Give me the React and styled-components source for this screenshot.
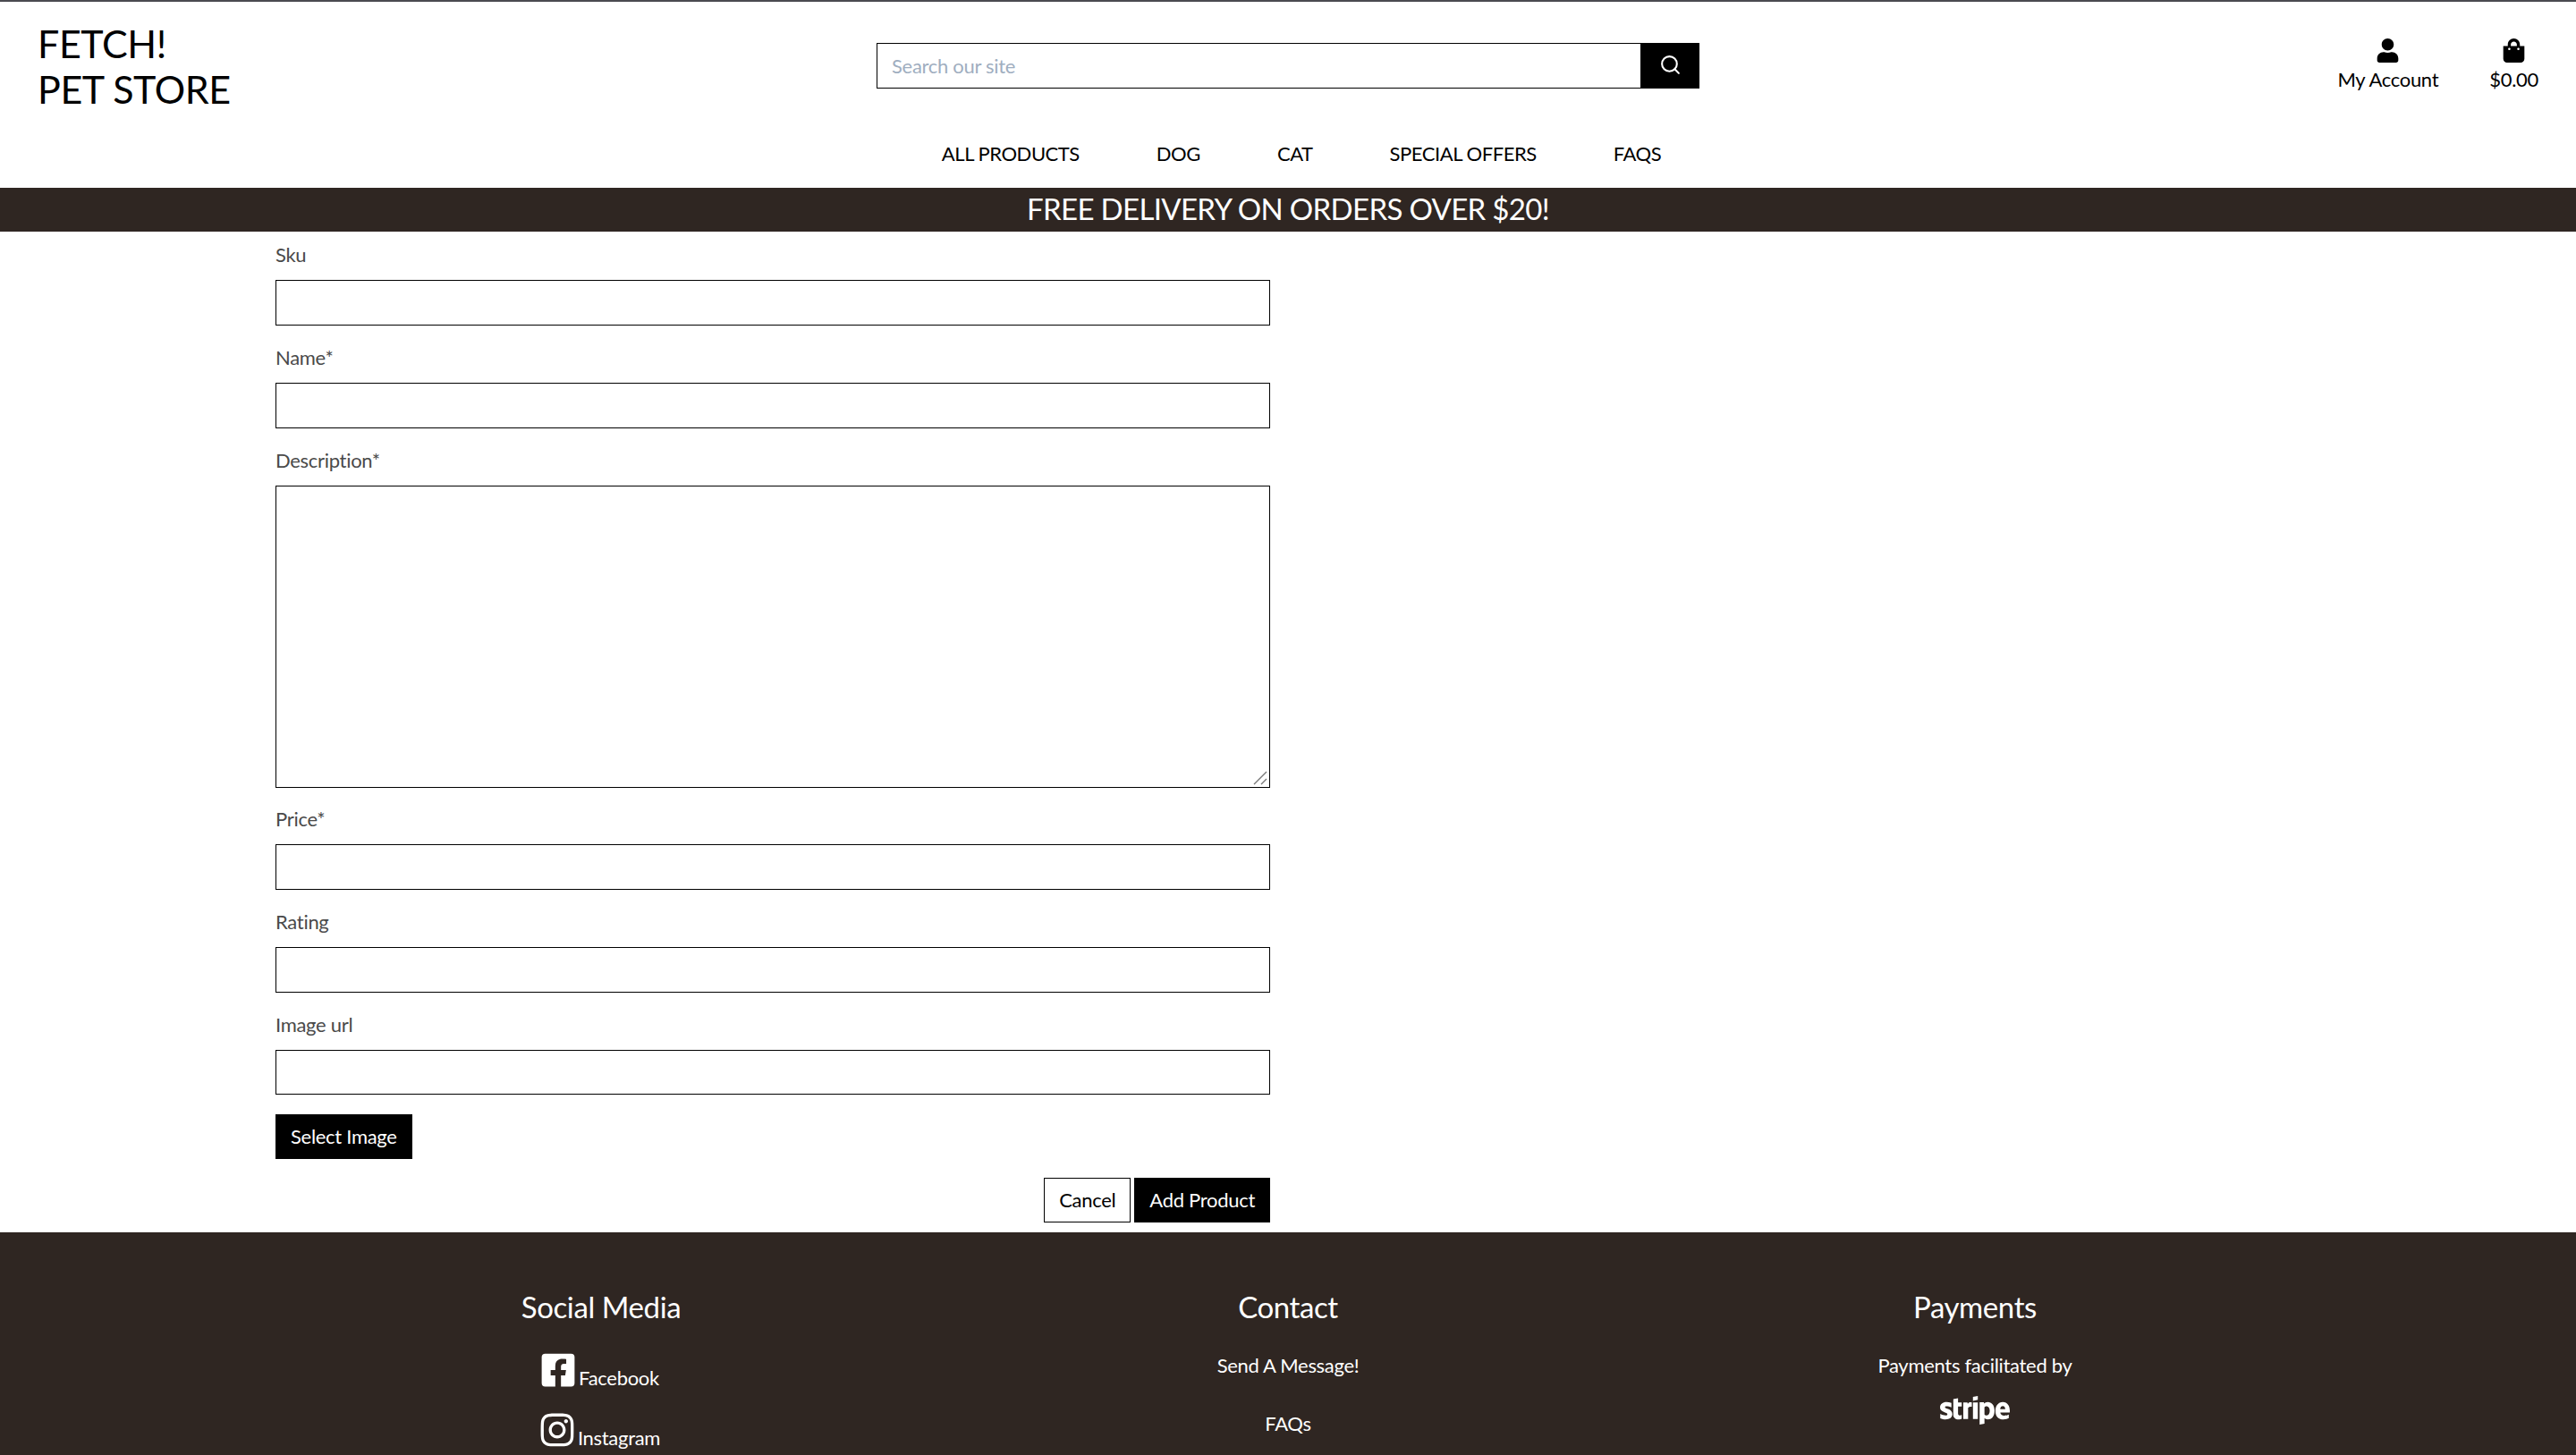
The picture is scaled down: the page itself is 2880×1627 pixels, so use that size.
import styled, { createGlobalStyle } from "styled-components";
import {
  FaUser,
  FaShoppingBag,
  FaFacebookSquare,
  FaInstagram,
  FaStripe,
} from "react-icons/fa";
import { FiSearch } from "react-icons/fi";

const GlobalStyle = createGlobalStyle`
  html, body {
    margin: 0;
    padding: 0;
    height: 100%;
    overflow: hidden;
    background: #fff;
  }
  * {
    box-sizing: border-box;
  }
  #root {
    height: 100%;
  }
`;

const Page = styled.div`
  height: 100%;
  display: flex;
  flex-direction: column;
  font-family: "Lato", "Liberation Sans", sans-serif;
  font-size: 22px;
  line-height: 26px;
  letter-spacing: -0.3px;
  color: #000;
`;

const Header = styled.header`
  border-top: 2px solid #4a4a50;
  height: 210px;
  flex: none;
`;

const TopRow = styled.div`
  display: grid;
  grid-template-columns: 1fr 920px 1fr;
  height: 146px;
`;

const Logo = styled.div`
  padding: 21px 0 0 42px;
  font-size: 43px;
  line-height: 51px;
  letter-spacing: -0.4px;
`;

const SearchBar = styled.form`
  display: flex;
  height: 51px;
  margin-top: 46px;
`;

const SearchInput = styled.input`
  flex: 1;
  min-width: 0;
  height: 100%;
  padding: 0 16px;
  border: 1px solid #000;
  border-right: none;
  border-radius: 0;
  outline: none;
  font: inherit;
  letter-spacing: inherit;

  &::placeholder {
    color: #a0aec0;
    opacity: 1;
  }
`;

const SearchButton = styled.button`
  width: 66px;
  height: 100%;
  padding: 0 0 3px;
  display: flex;
  align-items: center;
  justify-content: center;
  border: none;
  border-radius: 0;
  background: #000;
  color: #fff;
  font-size: 25px;
`;

const Tools = styled.div`
  display: flex;
  justify-content: flex-end;
  gap: 57px;
  padding: 41px 42px 0 0;
`;

const Tool = styled.a`
  display: flex;
  flex-direction: column;
  align-items: center;
  gap: 6px;

  svg {
    font-size: 27px;
  }
`;

const Nav = styled.nav`
  display: flex;
  justify-content: center;
  gap: 86px;
  height: 48px;
  padding-left: 30px;
  align-items: center;
  letter-spacing: -0.45px;
`;

const Banner = styled.div`
  flex: none;
  height: 49px;
  background: #2f2622;
  color: #fff;
  font-size: 33px;
  line-height: 47px;
  letter-spacing: -0.67px;
  text-align: center;
`;

const Main = styled.main`
  flex: none;
  width: 2304px;
  margin: 0 auto;
  padding: 14px 0 11px;
`;

const Form = styled.form`
  width: 1152px;
  padding: 0 20px;
`;

const Field = styled.div`
  margin-bottom: ${(p) => (p.$last ? "22px" : "24px")};
`;

const Label = styled.label`
  display: block;
  margin-bottom: 16px;
  line-height: 24px;
  color: #4a4a4a;
`;

const TextInput = styled.input`
  display: block;
  width: 100%;
  height: ${(p) => (p.$last ? "50px" : "51px")};
  border: 1px solid #000;
  border-radius: 0;
  outline: none;
  font: inherit;
`;

const AreaWrap = styled.div`
  position: relative;
  margin-bottom: -1px;

  svg {
    position: absolute;
    right: 3px;
    bottom: 3px;
    pointer-events: none;
  }
`;

const TextArea = styled.textarea`
  display: block;
  width: 100%;
  height: 338px;
  border: 1px solid #000;
  border-radius: 0;
  outline: none;
  resize: none;
  font: inherit;
`;

const Button = styled.button`
  height: 50px;
  padding: 0 16px;
  border: 1px solid #000;
  border-radius: 0;
  background: ${(p) => (p.$outline ? "#fff" : "#000")};
  color: ${(p) => (p.$outline ? "#000" : "#fff")};
  font: inherit;
  letter-spacing: inherit;
`;

const Actions = styled.div`
  display: flex;
  justify-content: flex-end;
  gap: 4px;
  margin-top: 21px;
`;

const Footer = styled.footer`
  flex: 1;
  min-height: 0;
  background: #2f2622;
  color: #fff;
  padding-top: 64px;
`;

const FooterGrid = styled.div`
  display: grid;
  grid-template-columns: repeat(3, 768px);
  justify-content: center;
  text-align: center;
`;

const FooterTitle = styled.h3`
  margin: 0 0 34px;
  font-size: 33px;
  line-height: 38px;
  font-weight: 400;
  letter-spacing: -0.4px;
`;

const FooterLink = styled.p`
  margin: 0 0 39px;
`;

const SocialLink = styled.a`
  display: flex;
  justify-content: center;
  align-items: flex-end;
  gap: 2px;
  height: 42px;
  margin: -3px 0 28px;
  padding-right: 4px;

  svg {
    font-size: 42px;
  }

  span {
    position: relative;
    top: 1px;
  }
`;

const PayNote = styled.p`
  margin: 0;
`;

const StripeMark = styled.div`
  display: flex;
  justify-content: center;
  margin-top: -2px;
  font-size: 78px;
  line-height: 0;
`;

const fields = [
  { label: "Sku" },
  { label: "Name*" },
  { label: "Description*", multi: true },
  { label: "Price*" },
  { label: "Rating" },
  { label: "Image url", last: true },
];

// the browser's resize grip, drawn as it looks in the reference
const ResizeGrip = () => (
  <svg width="16" height="16" viewBox="0 0 16 16" fill="none" stroke="#777" strokeWidth="1.4">
    <path d="M1 15 15 1M9 15l6-6" />
  </svg>
);

export default function App() {
  return (
    <Page>
      <GlobalStyle />
      <Header>
        <TopRow>
          <Logo>
            FETCH!
            <br />
            PET STORE
          </Logo>
          <SearchBar>
            <SearchInput placeholder="Search our site" />
            <SearchButton type="button">
              <FiSearch />
            </SearchButton>
          </SearchBar>
          <Tools>
            <Tool>
              <FaUser />
              My Account
            </Tool>
            <Tool>
              <FaShoppingBag />
              $0.00
            </Tool>
          </Tools>
        </TopRow>
        <Nav>
          <span>ALL PRODUCTS</span>
          <span>DOG</span>
          <span>CAT</span>
          <span>SPECIAL OFFERS</span>
          <span>FAQS</span>
        </Nav>
      </Header>
      <Banner>FREE DELIVERY ON ORDERS OVER $20!</Banner>
      <Main>
        <Form>
          {fields.map((f) => (
            <Field key={f.label} $last={f.last}>
              <Label>{f.label}</Label>
              {f.multi ? (
                <AreaWrap>
                  <TextArea />
                  <ResizeGrip />
                </AreaWrap>
              ) : (
                <TextInput $last={f.last} />
              )}
            </Field>
          ))}
          <Button type="button">Select Image</Button>
          <Actions>
            <Button type="button" $outline>
              Cancel
            </Button>
            <Button type="button">Add Product</Button>
          </Actions>
        </Form>
      </Main>
      <Footer>
        <FooterGrid>
          <div>
            <FooterTitle>Social Media</FooterTitle>
            <SocialLink>
              <FaFacebookSquare />
              <span>Facebook</span>
            </SocialLink>
            <SocialLink>
              <FaInstagram />
              <span>Instagram</span>
            </SocialLink>
          </div>
          <div>
            <FooterTitle>Contact</FooterTitle>
            <FooterLink>Send A Message!</FooterLink>
            <FooterLink>FAQs</FooterLink>
          </div>
          <div>
            <FooterTitle>Payments</FooterTitle>
            <PayNote>Payments facilitated by</PayNote>
            <StripeMark>
              <FaStripe />
            </StripeMark>
          </div>
        </FooterGrid>
      </Footer>
    </Page>
  );
}
